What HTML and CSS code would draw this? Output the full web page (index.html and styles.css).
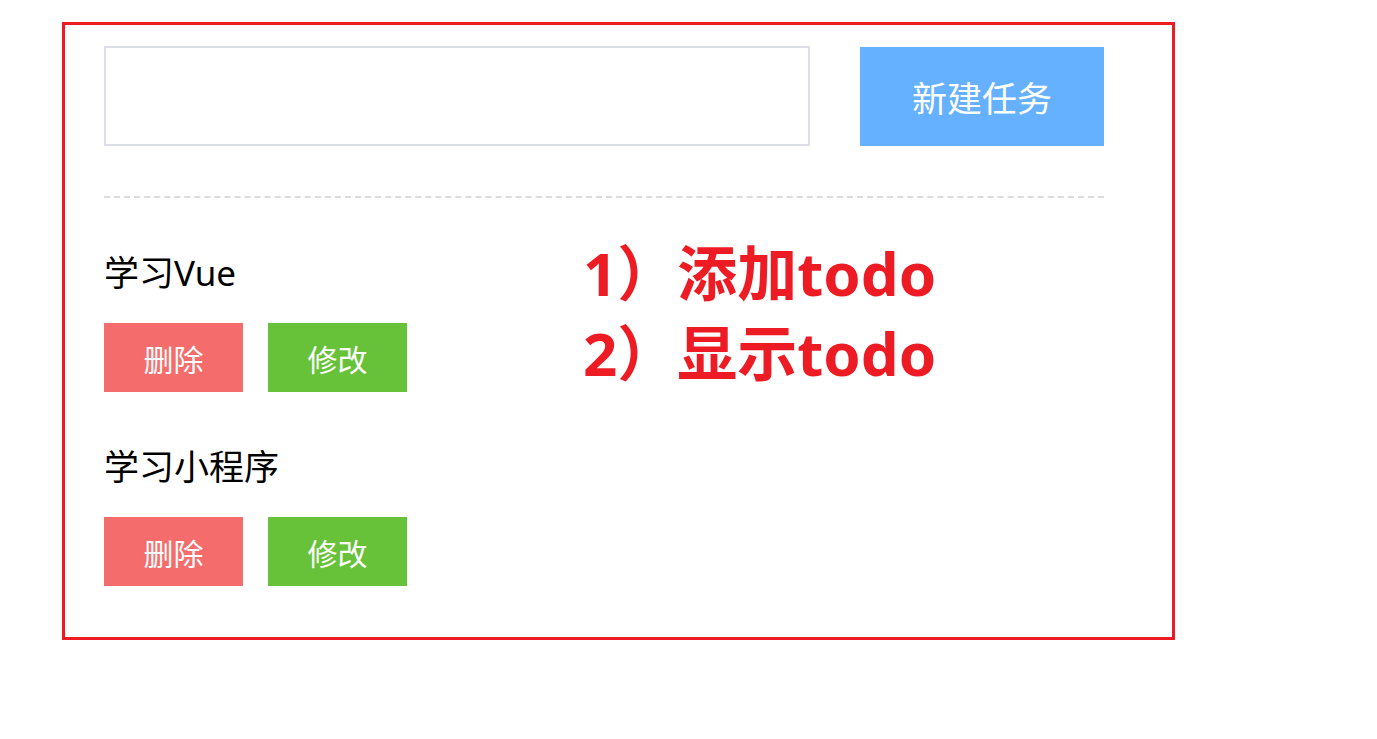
FILE: index.html
```html
<!DOCTYPE html>
<html lang="zh-CN">
<head>
<meta charset="utf-8">
<title>Todo</title>
<link rel="stylesheet" href="styles.css">
</head>
<body>
<div class="frame">
  <div class="header">
    <input class="task-input" type="text">
    <button class="btn btn-primary">新建任务</button>
  </div>
  <div class="divider"></div>
  <ul class="todo-list">
    <li class="todo-item">
      <div class="todo-title">学习Vue</div>
      <div class="todo-actions">
        <button class="btn btn-small btn-danger">删除</button>
        <button class="btn btn-small btn-success">修改</button>
      </div>
    </li>
    <li class="todo-item">
      <div class="todo-title">学习小程序</div>
      <div class="todo-actions">
        <button class="btn btn-small btn-danger">删除</button>
        <button class="btn btn-small btn-success">修改</button>
      </div>
    </li>
  </ul>
  <div class="note">
    <div class="note-line">1）添加todo</div>
    <div class="note-line">2）显示todo</div>
  </div>
</div>
</body>
</html>
```
FILE: styles.css
```css
html, body {
  margin: 0;
  padding: 0;
  background: #ffffff;
}
body {
  font-family: "Noto Sans", "Noto Sans CJK SC", sans-serif;
  color: #000000;
}
.frame {
  position: relative;
  box-sizing: border-box;
  width: 1113px;
  margin: 22px 0 0 62px;
  border: 3px solid #ed1c24;
  padding: 21px 68px 51px 39px;
}
.header {
  display: flex;
  align-items: center;
  gap: 50px;
}
.task-input {
  box-sizing: border-box;
  width: 706px;
  height: 100px;
  border: 2px solid #dcdfe6;
  margin: 0;
  padding: 0 15px;
  outline: none;
  font-family: inherit;
  font-size: 30px;
}
.btn {
  border: none;
  margin: 0;
  padding: 0;
  color: #ffffff;
  font-family: "Noto Sans", "Noto Sans CJK SC", sans-serif;
  cursor: pointer;
}
.btn-primary {
  width: 244px;
  height: 99px;
  background: #66b1ff;
  font-size: 35px;
}
.divider {
  margin-top: 50px;
  border-top: 2px dashed #dcdcdc;
}
.todo-list {
  list-style: none;
  margin: 0;
  padding: 0;
}
.todo-item {
  margin-top: 50px;
}
.todo-title {
  font-size: 35px;
  line-height: 50px;
}
.todo-actions {
  display: flex;
  gap: 25px;
  margin-top: 25px;
}
.btn-small {
  width: 139px;
  height: 69px;
  font-size: 30px;
}
.btn-danger {
  background: #f56c6c;
}
.btn-success {
  background: #67c23a;
}
.note {
  position: absolute;
  left: 518px;
  top: 208px;
  color: #ed1c24;
  font-weight: 700;
  font-size: 60px;
  line-height: 80px;
  white-space: nowrap;
}
```
